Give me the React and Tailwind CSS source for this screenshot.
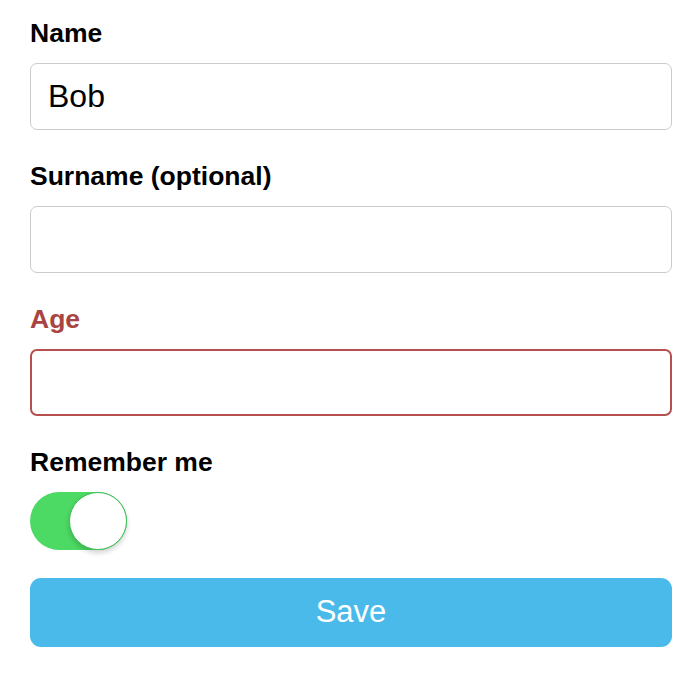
import { useState } from 'react'

function Field({ label, value = '', error = false }) {
  return (
    <div className="flex flex-col">
      <label
        className={`text-[26.5px] leading-[30px] font-bold ${
          error ? 'text-[#a94442]' : 'text-black'
        }`}
      >
        {label}
      </label>
      <input
        defaultValue={value}
        className={`mt-[15px] h-[67px] w-full rounded-[7px] bg-white px-[17px] text-[32px] text-black outline-none ${
          error ? 'border-2 border-[#b5504e]' : 'border border-[#cbcbcb]'
        }`}
      />
    </div>
  )
}

export default function App() {
  const [remember, setRemember] = useState(true)
  return (
    <div
      className="min-h-[673px] w-[700px] bg-white pl-[30px] pt-[18px]"
      style={{ fontFamily: '"Liberation Sans", Arial, sans-serif' }}
    >
      <div className="flex w-[642px] flex-col gap-[31px]">
        <Field label="Name" value="Bob" />
        <Field label="Surname (optional)" />
        <Field label="Age" error />
        <div className="flex flex-col">
          <span className="text-[26.5px] leading-[30px] font-bold text-black">Remember me</span>
          <button
            onClick={() => setRemember(!remember)}
            className={`mt-[15px] flex h-[58px] w-[97px] items-center rounded-full ${
              remember ? 'justify-end bg-[#4cd964]' : 'justify-start bg-[#e5e5e5]'
            }`}
          >
            <span className="h-[58px] w-[58px] rounded-full border border-[#3fbf55] bg-white shadow-[0_3px_5px_rgba(0,0,0,0.18)]" />
          </button>
          <button className="mt-[28px] h-[69px] w-full rounded-[11px] bg-[#4abaea] text-[31px] text-white">
            Save
          </button>
        </div>
      </div>
    </div>
  )
}
